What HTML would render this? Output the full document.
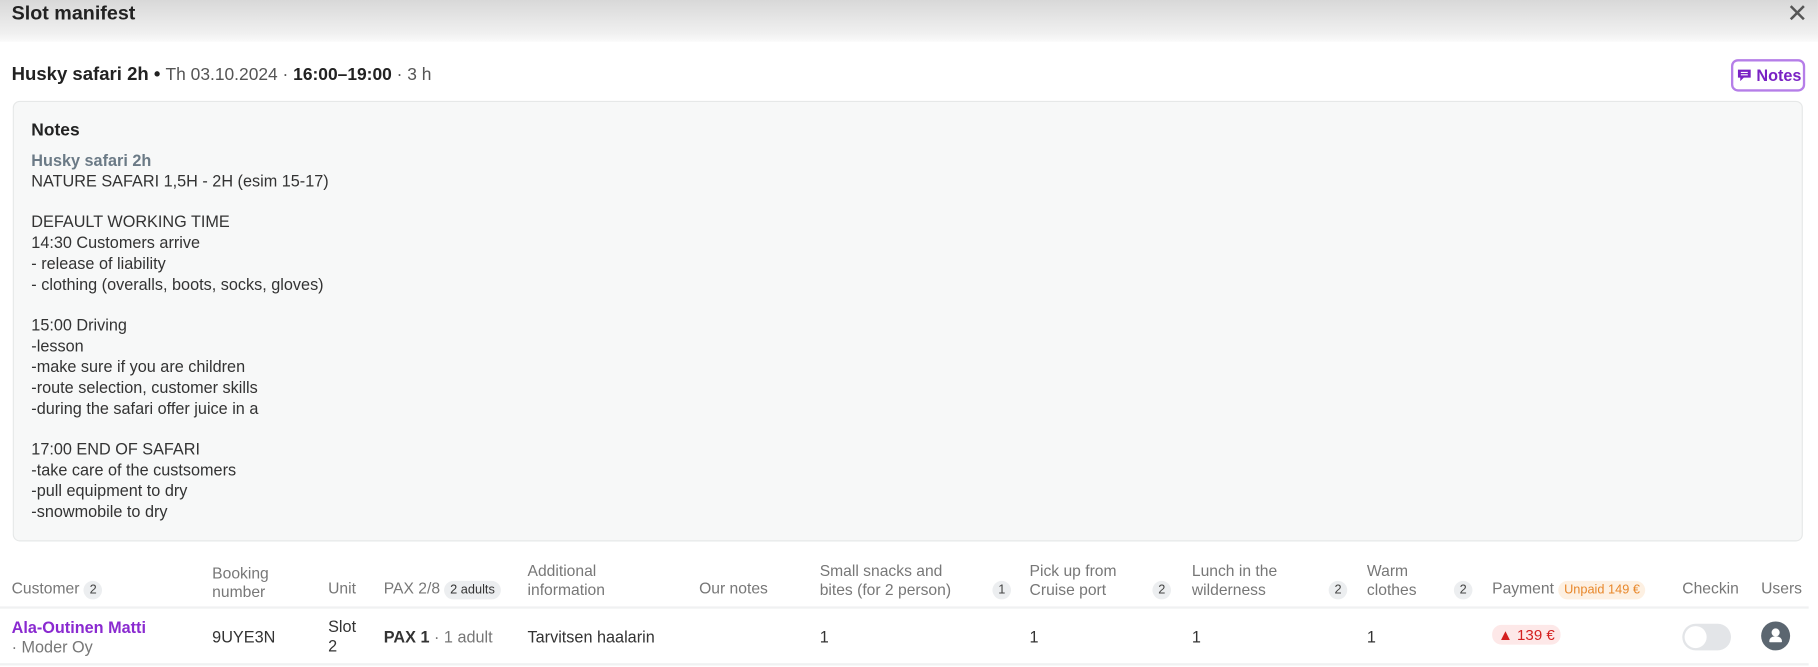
<!DOCTYPE html>
<html><head><meta charset="utf-8"><style>
*{margin:0;padding:0;box-sizing:border-box}
body{width:1818px;height:667px;background:#fff;font-family:"Liberation Sans",sans-serif;color:#222;overflow:hidden;font-size:14px}
#w{position:absolute;left:0;top:0;width:1568px;height:575px;transform:scale(1.1594);transform-origin:0 0}
.a{position:absolute;white-space:nowrap}
.hdr{position:absolute;left:0;top:0;width:1568px;height:36px;background:linear-gradient(#d8d8d8,#f0f0f0 80%,#fafafa)}
.box{position:absolute;left:11px;top:87px;width:1544px;height:380px;background:#f7f8f8;border:1px solid #e6e8e8;border-radius:6px}
.nt{position:absolute;left:27px;top:130px;font-size:14px;line-height:17.8px;color:#333}
.th{color:#777;font-size:13.5px;line-height:16px}
.bd{display:inline-block;background:#eceef0;color:#444;border-radius:9px;font-size:11px;padding:1px 5px;line-height:14px}
.line{position:absolute;left:0;width:1560px;height:2px;background:#f0f1f2}
</style></head><body><div id="w">
<div class="hdr"></div>
<div class="a" style="left:10px;top:2px;font-size:17px;font-weight:bold;color:#222">Slot manifest</div>
<div class="a" style="left:1541px;top:-1px;font-size:22px;color:#555">✕</div>
<div class="a" style="left:10px;top:56px;font-size:16px"><b>Husky safari 2h •</b> <span style="color:#555;font-size:15px">Th 03.10.2024 · </span><b style="font-size:15px">16:00–19:00</b><span style="color:#555;font-size:15px"> · 3 h</span></div>
<div class="a" style="left:1493px;top:51px;width:64px;height:28px;border:2px solid #b57ee8;border-radius:6px;color:#7a22c4;font-weight:bold;font-size:14px;padding:4px 0 0 3px"><svg width="13" height="12" viewBox="0 0 13 12" style="vertical-align:-1px"><path d="M1 1h11v7H6l-3 3V8H1z" fill="#7a22c4"/><path d="M3.5 3.5h6M3.5 5.5h6" stroke="#fff" stroke-width="1"/></svg> Notes</div>
<div class="box"></div>
<div class="a" style="left:27px;top:104px;font-size:15px;font-weight:bold">Notes</div>
<div class="nt"><span style="color:#6b7a86;font-weight:bold">Husky safari 2h</span><br>NATURE SAFARI 1,5H - 2H (esim 15-17)<br><br>DEFAULT WORKING TIME<br>14:30 Customers arrive<br>- release of liability<br>- clothing (overalls, boots, socks, gloves)<br><br>15:00 Driving<br>-lesson<br>-make sure if you are children<br>-route selection, customer skills<br>-during the safari offer juice in a<br><br>17:00 END OF SAFARI<br>-take care of the custsomers<br>-pull equipment to dry<br>-snowmobile to dry</div>

<div class="a th" style="left:10px;top:500px">Customer <span class="bd">2</span></div>
<div class="a th" style="left:183px;top:487px">Booking<br>number</div>
<div class="a th" style="left:283px;top:500px">Unit</div>
<div class="a th" style="left:331px;top:500px">PAX 2/8 <span class="bd" style="color:#333">2 adults</span></div>
<div class="a th" style="left:455px;top:485px">Additional<br>information</div>
<div class="a th" style="left:603px;top:500px">Our notes</div>
<div class="a th" style="left:707px;top:485px">Small snacks and<br>bites (for 2 person)</div>
<div class="a th" style="left:856px;top:500px"><span class="bd">1</span></div>
<div class="a th" style="left:888px;top:485px">Pick up from<br>Cruise port</div>
<div class="a th" style="left:994px;top:500px"><span class="bd">2</span></div>
<div class="a th" style="left:1028px;top:485px">Lunch in the<br>wilderness</div>
<div class="a th" style="left:1146px;top:500px"><span class="bd">2</span></div>
<div class="a th" style="left:1179px;top:485px">Warm<br>clothes</div>
<div class="a th" style="left:1254px;top:500px"><span class="bd">2</span></div>
<div class="a th" style="left:1287px;top:500px">Payment <span class="bd" style="background:#fdf0e2;color:#e8872a">Unpaid 149 €</span></div>
<div class="a th" style="left:1451px;top:500px">Checkin</div>
<div class="a th" style="left:1519px;top:500px">Users</div>
<div class="line" style="top:523px"></div>

<div class="a" style="left:10px;top:533px;font-size:14px;line-height:17px;color:#8a2ad0;font-weight:bold">Ala-Outinen Matti<br><span style="color:#777;font-weight:normal">· Moder Oy</span></div>
<div class="a" style="left:183px;top:541px;color:#333">9UYE3N</div>
<div class="a" style="left:283px;top:532px;line-height:17px;color:#333">Slot<br>2</div>
<div class="a" style="left:331px;top:541px;color:#333"><b>PAX 1</b><span style="color:#777"> · 1 adult</span></div>
<div class="a" style="left:455px;top:541px;color:#333">Tarvitsen haalarin</div>
<div class="a" style="left:707px;top:541px;color:#333">1</div>
<div class="a" style="left:888px;top:541px;color:#333">1</div>
<div class="a" style="left:1028px;top:541px;color:#333">1</div>
<div class="a" style="left:1179px;top:541px;color:#333">1</div>
<div class="a" style="left:1287px;top:539px;background:#fde8e8;color:#d42020;border-radius:8px;padding:1px 5px;font-size:13px">▲ 139 €</div>
<div class="a" style="left:1451px;top:538px;width:42px;height:23px;border-radius:12px;background:#e3e5e8"><div style="position:absolute;left:2px;top:2px;width:19px;height:19px;border-radius:50%;background:#fff"></div></div>
<div class="a" style="left:1519px;top:536px;width:25px;height:25px;border-radius:50%;background:#5b6670"><div style="position:absolute;left:9px;top:6px;width:7px;height:7px;border-radius:50%;background:#fff"></div><div style="position:absolute;left:7px;top:13px;width:11px;height:5px;border-radius:5px 5px 1px 1px;background:#fff"></div></div>
<div class="line" style="top:572px"></div>
</div></body></html>
